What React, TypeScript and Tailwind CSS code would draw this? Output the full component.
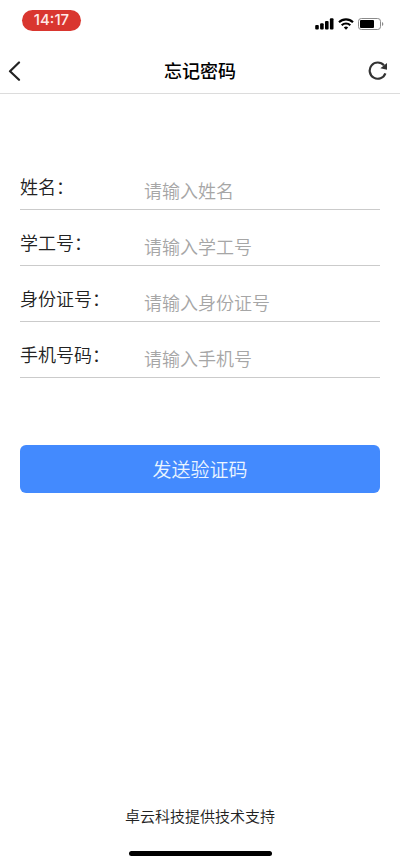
const fields = [
  { id: "name", label: "姓名：", placeholder: "请输入姓名", type: "text" },
  { id: "staff-no", label: "学工号：", placeholder: "请输入学工号", type: "text" },
  { id: "id-card", label: "身份证号：", placeholder: "请输入身份证号", type: "text" },
  { id: "phone", label: "手机号码：", placeholder: "请输入手机号", type: "tel" },
];

function StatusBar() {
  return (
    <div className="flex h-12 items-start justify-between pt-[10px] pr-4 pl-[22px]">
      <span className="flex h-[21px] w-[59px] items-center justify-center rounded-full bg-[#d9362f] font-['Inter','Liberation_Sans',sans-serif] text-[15px] font-medium text-[#ffe9e6]">
        14:17
      </span>
      <div className="flex h-7 items-center gap-1">
        <svg width="19" height="12" viewBox="0 0 19 12" aria-hidden="true">
          <rect x="0.2" y="7" width="3.6" height="4.5" rx="1" />
          <rect x="5.1" y="5.2" width="3.6" height="6.3" rx="1" />
          <rect x="10" y="3" width="3.6" height="8.5" rx="1" />
          <rect x="14.9" y="0.3" width="3.6" height="11.2" rx="1" />
        </svg>
        <svg width="16" height="12" viewBox="0 0 16 12" fill="none" stroke="#000" strokeWidth="2.1" aria-hidden="true">
          <path d="M1 4.2a10 10 0 0 1 14 0" />
          <path d="M3.7 7.3a6.2 6.2 0 0 1 8.6 0" />
          <path d="M5.8 9.5a3.2 3.2 0 0 1 4.4 0L8 11.8Z" fill="#000" stroke="none" />
        </svg>
        <svg width="26" height="12" viewBox="0 0 26 12" aria-hidden="true">
          <rect x="0.5" y="0.5" width="22" height="11" rx="2.8" fill="none" stroke="#8a8a8a" />
          <rect x="2" y="2" width="14" height="8" rx="1" />
          <path d="M24 4v4c1.8-.8 1.8-3.2 0-4Z" fill="#8a8a8a" />
        </svg>
      </div>
    </div>
  );
}

function Header() {
  return (
    <header className="grid h-[46px] grid-cols-[1fr_auto_1fr] items-center border-b border-[#dcdcdc] px-2">
      <button type="button" aria-label="返回" className="flex h-10 w-8 items-center">
        <svg width="13" height="20" viewBox="0 0 13 20" fill="none" stroke="#222" strokeWidth="2.2" strokeLinecap="round" strokeLinejoin="round" aria-hidden="true">
          <path d="M11 1.5 2 10.2l9 8.6" />
        </svg>
      </button>
      <h1 className="pb-0.5 text-lg font-medium text-black">忘记密码</h1>
      <button type="button" aria-label="刷新" className="flex h-10 w-8 items-center justify-end justify-self-end pr-1">
        <svg width="20" height="20" viewBox="0 0 20 20" fill="none" aria-hidden="true">
          <path d="M16 4.4A8.1 8.1 0 1 0 17.4 12.4" stroke="#333" strokeWidth="2.2" />
          <path d="M19 2V8.8L12.4 7.2Z" fill="#333" />
        </svg>
      </button>
    </header>
  );
}

export default function App() {
  return (
    <div lang="zh-CN" className="flex min-h-screen flex-col bg-white font-['Noto_Sans_CJK_SC',sans-serif]">
      <StatusBar />
      <Header />
      <main className="flex-1 px-5 pt-[60px]">
        <form>
          {fields.map((field) => (
            <div key={field.id} className="flex h-14 items-end border-b border-[#cbcbcb]">
              <label htmlFor={field.id} className="w-[124px] shrink-0 pb-[9px] text-lg font-[350] text-[#222]">
                {field.label}
              </label>
              <input
                id={field.id}
                type={field.type}
                placeholder={field.placeholder}
                className="h-[38px] min-w-0 flex-1 bg-transparent text-lg font-[350] text-[#222] outline-none placeholder:text-[#a6a6a6]"
              />
            </div>
          ))}
          <button type="submit" className="mt-[67px] h-12 w-full rounded-md bg-[#438afe] text-[19px] font-[350] text-[#eaf5ff]">
            发送验证码
          </button>
        </form>
      </main>
      <footer className="flex flex-col items-center pb-2">
        <p className="text-[15px] leading-6 font-[350] text-[#222]">卓云科技提供技术支持</p>
        <div className="mt-[23px] h-[5px] w-[143px] rounded-full bg-black" />
      </footer>
    </div>
  );
}
